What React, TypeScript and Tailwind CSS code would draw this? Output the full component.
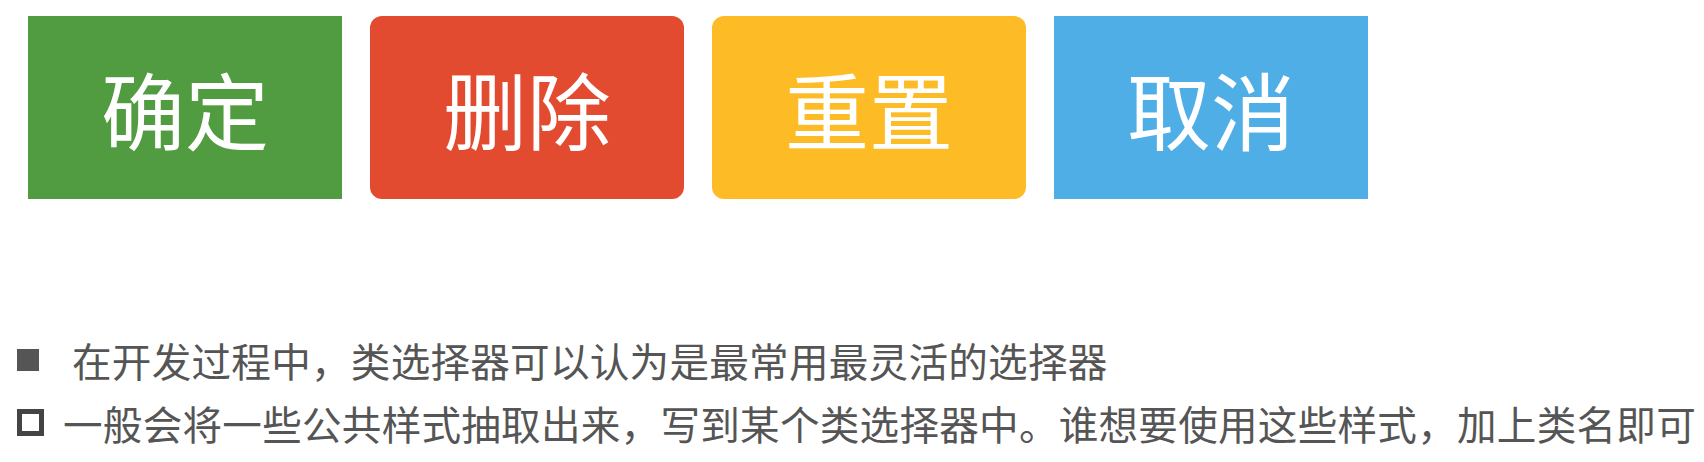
const buttons = [
  { label: '确定', className: 'bg-[#519b41]' },
  { label: '删除', className: 'bg-[#e24b2f] rounded-[12px]' },
  { label: '重置', className: 'bg-[#fdbc25] rounded-[12px]' },
  { label: '取消', className: 'bg-[#50aee7]' },
]

export default function App() {
  return (
    <div
      className="h-[462px] w-[1704px] bg-white"
      style={{ fontFamily: '"Noto Sans CJK SC", "Noto Sans", sans-serif' }}
    >
      <div className="flex gap-[28px] pl-[28px] pt-[16px]">
        {buttons.map((b) => (
          <div
            key={b.label}
            className={`flex h-[183px] w-[314px] items-center justify-center text-[84px] leading-none text-white ${b.className}`}
          >
            {b.label}
          </div>
        ))}
      </div>

      <ul className="mt-[129px] pl-[17px] text-[39.6px] leading-[63px] tracking-[0.25px] text-[#555]">
        <li className="flex items-center">
          <span className="h-[22px] w-[22px] bg-[#555]" />
          <span className="ml-[33px]">在开发过程中，类选择器可以认为是最常用最灵活的选择器</span>
        </li>
        <li className="flex items-center">
          <span className="h-[27px] w-[27px] border-[5px] border-[#444]" />
          <span className="ml-[19px]">
            一般会将一些公共样式抽取出来，写到某个类选择器中。谁想要使用这些样式，加上类名即可
          </span>
        </li>
      </ul>
    </div>
  )
}
